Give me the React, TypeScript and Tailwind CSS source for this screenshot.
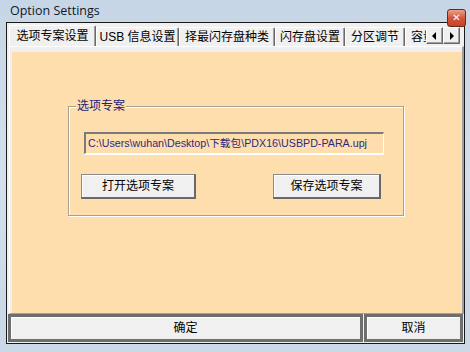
import React from 'react';

const cjk = "font-['Liberation_Sans','Noto_Sans_CJK_SC',sans-serif]";

const tabs = [
  { label: '选项专案设置', w: 'w-[87px]', active: true },
  { label: 'USB 信息设置', w: 'w-[83px]', active: false },
  { label: '择最闪存盘种类', w: 'w-[96px]', active: false },
  { label: '闪存盘设置', w: 'w-[70px]', active: false },
  { label: '分区调节', w: 'w-[60px]', active: false },
  { label: '容量', w: 'w-[60px]', active: false },
];

const Tab: React.FC<{ label: string; w: string; active: boolean }> = ({ label, w, active }) => (
  <div
    className={`${w} shrink-0 flex items-center bg-[#f0f0f0] border-t border-l border-white border-r border-r-[#696969] rounded-t-[2px] shadow-[inset_-1px_0_0_#a0a0a0] text-[12px] text-black whitespace-nowrap ${
      label === '容量' ? 'justify-start pl-[5px]' : 'justify-center'
    } ${active ? 'h-[22px] relative z-10 -mb-[1px] pb-[1px]' : 'h-[19px]'}`}
  >
    {label}
  </div>
);

const Arrow: React.FC<{ dir: 'left' | 'right' }> = ({ dir }) => (
  <div className="w-[17px] h-[17px] bg-[#f0f0f0] border border-t-white border-l-white border-r-[#696969] border-b-[#696969] shadow-[inset_-1px_-1px_0_#a0a0a0] flex items-center justify-center">
    <svg width="5" height="8" viewBox="0 0 5 8">
      {dir === 'left' ? <path d="M4 0 L0 4 L4 8 Z" fill="#000" /> : <path d="M1 0 L5 4 L1 8 Z" fill="#000" />}
    </svg>
  </div>
);

const RaisedButton: React.FC<{ label: string; w: string }> = ({ label, w }) => (
  <button className={`${w} h-[25px] bg-[#f0f0f0] border border-[#8a8a8a] border-r-2 border-b-2 border-r-[#696969] border-b-[#696969] shadow-[inset_1px_1px_0_#fff] text-[12px] text-black flex items-center justify-center`}>
    {label}
  </button>
);

export default function App() {
  return (
    <div className={`${cjk} w-[470px] h-[352px] overflow-hidden relative flex flex-col bg-gradient-to-b from-[#c7d6e6] via-[#d3dfec] to-[#c9d7e6]`}>
      {/* title bar */}
      <div className="h-[22px] shrink-0 flex items-center pl-[10px]">
        <span className="font-['Open_Sans',sans-serif] text-[12.5px] text-[#101828] leading-none mt-[1px]">Option Settings</span>
      </div>
      <div className="absolute top-[9px] right-[4px] w-[19px] h-[18px] rounded-[3px] border border-[#6b2a1c] bg-gradient-to-b from-[#eba08c] via-[#d6553a] to-[#c4442a] flex items-center justify-center z-20">
        <span className="text-white text-[10px] font-bold leading-none font-['DejaVu_Sans',sans-serif]">✕</span>
      </div>

      {/* client */}
      <div className="ml-[6px] w-[459px] h-[322px] border border-[#1a1a1a] bg-[#f0f0f0] flex flex-col">
        {/* tab strip */}
        <div className="h-[23px] shrink-0 flex items-end pl-[2px]">
          <div className="w-[417px] h-[23px] overflow-hidden flex items-end">
            {tabs.map((t) => (
              <Tab key={t.label} {...t} />
            ))}
          </div>
          <div className="flex self-start mt-[4px]">
            <Arrow dir="left" />
            <Arrow dir="right" />
          </div>
        </div>

        {/* tab pane */}
        <div className="ml-[2px] h-[268px] shrink-0 border-t border-l border-white border-r-2 border-b border-r-[#a0a0a0] border-b-[#a0a0a0] pt-[5px] pl-[2px] flex flex-col">
          <div className="flex-1 bg-[#ffdead] pl-[56px] pt-[54px]">
            <div className="relative w-[336px] h-[110px] border border-[#a8a090] shadow-[inset_1px_1px_0_#fff,1px_1px_0_#fff] pl-[15px] pt-[25px]">
              <span className="absolute -top-[8px] left-[7px] px-[1px] bg-[#ffdead] text-[12px] leading-[15px] text-[#1c2080]">选项专案</span>
              <div className="w-[300px] h-[22px] border-t-2 border-l-2 border-t-[#7a7a7a] border-l-[#7a7a7a] border-b border-r border-white shadow-[0_1px_0_#fff] flex items-center pl-[2px] text-[10.7px] text-[#2a2a80] whitespace-nowrap">
                C:\Users\wuhan\Desktop\下载包\PDX16\USBPD-PARA.upj
              </div>
              <div className="flex mt-[20px] -ml-[3px] gap-[77px]">
                <RaisedButton label="打开选项专案" w="w-[115px]" />
                <RaisedButton label="保存选项专案" w="w-[108px]" />
              </div>
            </div>
          </div>
        </div>

        {/* bottom buttons */}
        <div className="h-[28px] shrink-0 flex gap-[1px] pl-[1px] pr-[1px]">
          <button className="w-[355px] h-[28px] bg-[#f0f0f0] border-[3px] border-[#6e6e6e] shadow-[inset_1px_1px_0_#fff] text-[12px] text-black flex items-center justify-center">
            确定
          </button>
          <button className="flex-1 h-[28px] bg-[#f0f0f0] border-[3px] border-[#6e6e6e] shadow-[inset_1px_1px_0_#fff] text-[12px] text-black flex items-center justify-center">
            取消
          </button>
        </div>
      </div>
    </div>
  );
}
